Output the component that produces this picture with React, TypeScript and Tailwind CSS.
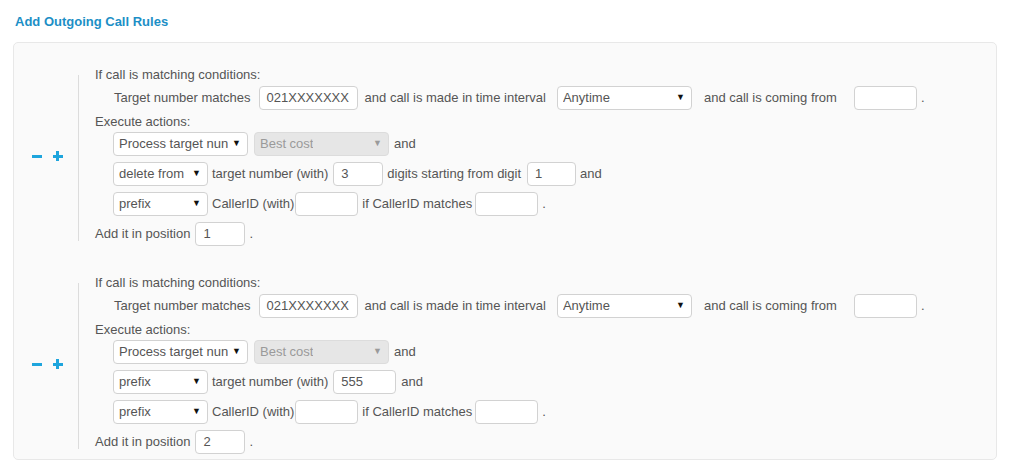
import React from "react";

const font = { fontFamily: '"Liberation Sans", Arial, sans-serif' };

function Sel({ w, label, disabled }: { w: number; label: string; disabled?: boolean }) {
  return (
    <div
      className={`h-[24px] flex items-center justify-between rounded-[4px] border pl-[5px] pr-[6px] shrink-0 ${
        disabled ? "bg-[#e6e6e6] border-[#dcdcdc] text-[#9a9a9a]" : "bg-white border-[#d2d2d2] text-[#555]"
      }`}
      style={{ width: w }}
    >
      <span className="whitespace-nowrap overflow-hidden">{label}</span>
      <span className={`text-[9px] ${disabled ? "text-[#9a9a9a]" : "text-[#111]"}`}>▼</span>
    </div>
  );
}

function Inp({ w, value }: { w: number; value?: string }) {
  return (
    <div
      className="h-[24px] flex items-center rounded-[4px] border border-[#d2d2d2] bg-white pl-[7px] text-[#555] shrink-0"
      style={{ width: w }}
    >
      {value}
    </div>
  );
}

function Rule({ second, pos }: { second?: boolean; pos: string }) {
  return (
    <div className="flex">
      <div className="w-[64px] shrink-0 flex items-center justify-center gap-[11px] pl-[2px]">
        <span className="block w-[10px] h-[3px] bg-[#1ea5dd]" />
        <span className="relative block w-[10px] h-[10px]">
          <span className="absolute left-0 top-[3.5px] w-[10px] h-[3px] bg-[#1ea5dd]" />
          <span className="absolute top-0 left-[3.5px] w-[3px] h-[10px] bg-[#1ea5dd]" />
        </span>
      </div>
      <div className="w-px bg-[#dcdcdc] mt-[9px] mb-[5px] shrink-0" />
      <div className="pl-[16px] flex flex-col text-[13px] text-[#555]">
        <div className="h-[18px] leading-[18px]">If call is matching conditions:</div>
        <div className="h-[24px] mt-[2px] flex items-center pl-[19px]">
          <span>Target number matches</span>
          <span className="ml-[8px]"><Inp w={99} value="021XXXXXXX" /></span>
          <span className="ml-[7px]">and call is made in time interval</span>
          <span className="ml-[11px]"><Sel w={135} label="Anytime" /></span>
          <span className="ml-[12px]">and call is coming from</span>
          <span className="ml-[17px]"><Inp w={63} /></span>
          <span className="ml-[4px]">.</span>
        </div>
        <div className="h-[18px] leading-[18px] mt-[3px]">Execute actions:</div>
        <div className="flex flex-col gap-[6px] mt-[1px] pl-[18px]">
          <div className="h-[24px] flex items-center">
            <Sel w={135} label="Process target nun" />
            <span className="ml-[6px]"><Sel w={135} label="Best cost" disabled /></span>
            <span className="ml-[5px]">and</span>
          </div>
          {second ? (
            <div className="h-[24px] flex items-center">
              <Sel w={95} label="prefix" />
              <span className="ml-[4px]">target number (with)</span>
              <span className="ml-[5px]"><Inp w={63} value="555" /></span>
              <span className="ml-[5px]">and</span>
            </div>
          ) : (
            <div className="h-[24px] flex items-center">
              <Sel w={95} label="delete from" />
              <span className="ml-[4px]">target number (with)</span>
              <span className="ml-[5px]"><Inp w={50} value="3" /></span>
              <span className="ml-[4px]">digits starting from digit</span>
              <span className="ml-[6px]"><Inp w={49} value="1" /></span>
              <span className="ml-[4px]">and</span>
            </div>
          )}
          <div className="h-[24px] flex items-center">
            <Sel w={95} label="prefix" />
            <span className="ml-[4px]">CallerID (with)</span>
            <span className="ml-[1px]"><Inp w={63} /></span>
            <span className="ml-[4px]">if CallerID matches</span>
            <span className="ml-[3px]"><Inp w={63} /></span>
            <span className="ml-[4px]">.</span>
          </div>
        </div>
        <div className="h-[24px] flex items-center mt-[6px]">
          <span>Add it in position</span>
          <span className="ml-[5px]"><Inp w={50} value={pos} /></span>
          <span className="ml-[4px]">.</span>
        </div>
      </div>
    </div>
  );
}

export default function App() {
  return (
    <div className="w-[1011px] h-[471px] bg-white" style={font}>
      <div className="pt-[14px] pl-[15px] h-[42px]">
        <div className="text-[13px] font-bold text-[#1c8fc6] leading-[16px]">Add Outgoing Call Rules</div>
      </div>
      <div className="ml-[13px] w-[984px] h-[418px] rounded-[5px] border border-[#e8e8e8] bg-[#fafafa] pt-[23px] flex flex-col gap-[28px]">
        <Rule pos="1" />
        <Rule second pos="2" />
      </div>
    </div>
  );
}
